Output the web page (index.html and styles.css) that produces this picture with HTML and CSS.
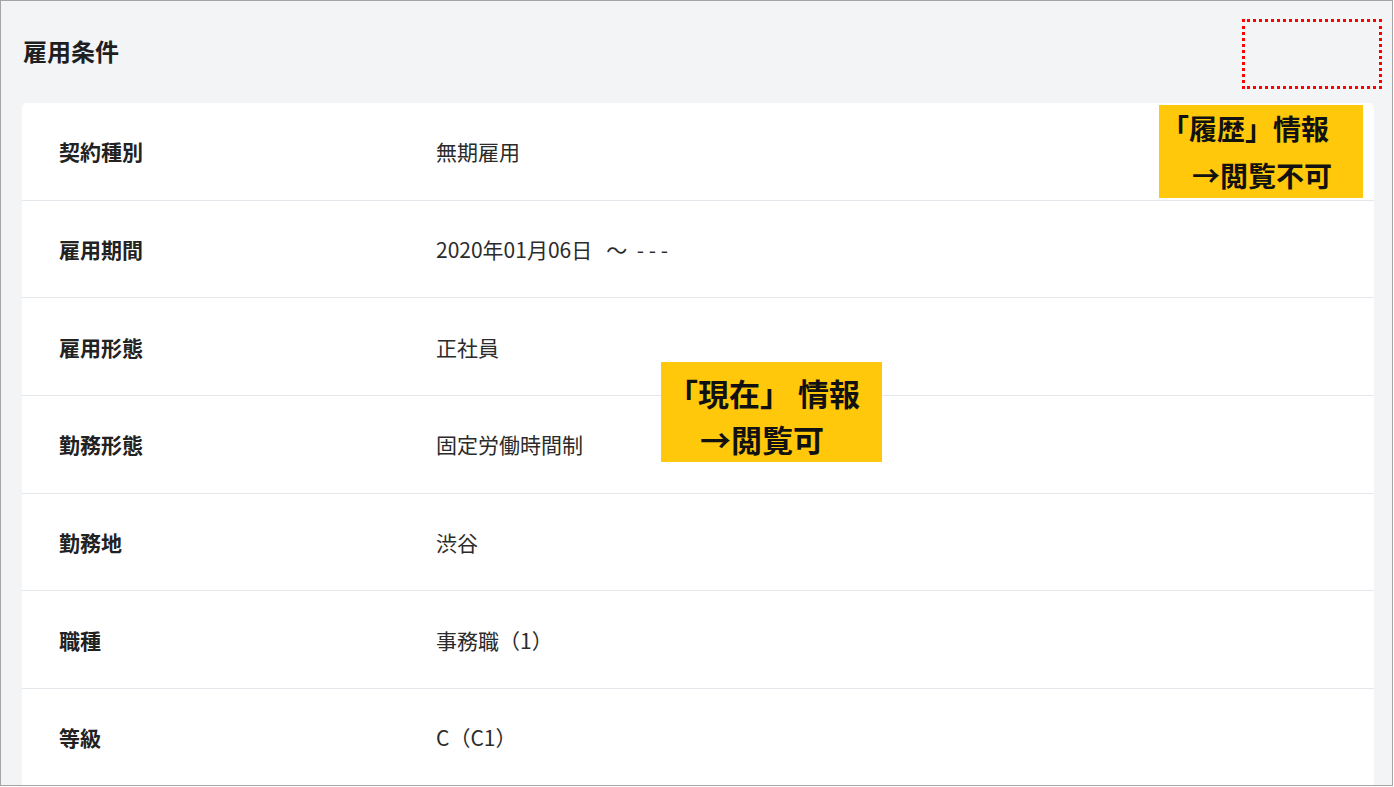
FILE: index.html
```html
<!DOCTYPE html>
<html lang="ja">
<head>
<meta charset="utf-8">
<title>雇用条件</title>
<link rel="stylesheet" href="styles.css">
</head>
<body>
<div class="frame">
  <header class="head">
    <h1 class="title">雇用条件</h1>
  </header>
  <section class="card">
    <div class="row"><div class="label">契約種別</div><div class="value">無期雇用</div></div>
    <div class="row"><div class="label">雇用期間</div><div class="value pre">2020年01月06日   〜  - - -</div></div>
    <div class="row"><div class="label">雇用形態</div><div class="value">正社員</div></div>
    <div class="row"><div class="label">勤務形態</div><div class="value">固定労働時間制</div></div>
    <div class="row"><div class="label">勤務地</div><div class="value">渋谷</div></div>
    <div class="row"><div class="label">職種</div><div class="value">事務職（1）</div></div>
    <div class="row"><div class="label">等級</div><div class="value">C（C1）</div></div>
  </section>
  <div class="dotted"></div>
  <div class="note note-history"><span class="l1">「履歴」情報</span><span class="l2">→閲覧不可</span></div>
  <div class="note note-current"><span class="l1">「現在」 情報</span><span class="l2">→閲覧可</span></div>
</div>
</body>
</html>
```

FILE: styles.css
```css
* { box-sizing: border-box; }
html, body { margin: 0; padding: 0; background: #ffffff; }
body { font-family: "Noto Sans CJK JP", "Noto Sans", sans-serif; color: #222; }

.frame {
  position: relative;
  width: 1393px;
  height: 786px;
  border: 1px solid #a4a4a4;
  background: #f3f4f6;
  overflow: hidden;
  padding: 0 18px 0 21px;
}

.head {
  height: 102px;
  display: flex;
  align-items: center;
  padding-left: 1px;
}
.title {
  margin: 0;
  font-size: 24px;
  font-weight: 700;
  color: #1f1f1f;
  line-height: 1;
  position: relative;
  top: -1px;
}

.card {
  background: #fff;
  border-radius: 5px 5px 0 0;
}

.row {
  display: flex;
  align-items: center;
  height: 97.7px;
  border-bottom: 1px solid #e3e6ea;
  padding-left: 37px;
}
.label {
  width: 377px;
  font-size: 21px;
  font-weight: 700;
  color: #222;
}
.value {
  font-size: 21px;
  font-weight: 400;
  color: #2b2b2b;
}
.pre { white-space: pre; }

.dotted {
  position: absolute;
  left: 1241px;
  top: 18px;
  width: 140px;
  height: 70px;
  border: 3px dotted #ff0000;
}

.note {
  position: absolute;
  background: #ffc80b;
  color: #111;
  font-weight: 700;
  line-height: 1;
  display: flex;
  flex-direction: column;
}
.note .l1, .note .l2 { white-space: pre; }
.note-history {
  left: 1158px;
  top: 104px;
  width: 204px;
  height: 93px;
  font-size: 28px;
  padding: 9px 0 0 2px;
  gap: 19px;
}
.note-history .l2 { padding-left: 31px; }
.note-current {
  left: 660px;
  top: 361px;
  width: 221px;
  height: 100px;
  font-size: 31px;
  padding: 15px 0 0 6px;
  gap: 15px;
}
.note-current .l2 { padding-left: 33px; }
```
